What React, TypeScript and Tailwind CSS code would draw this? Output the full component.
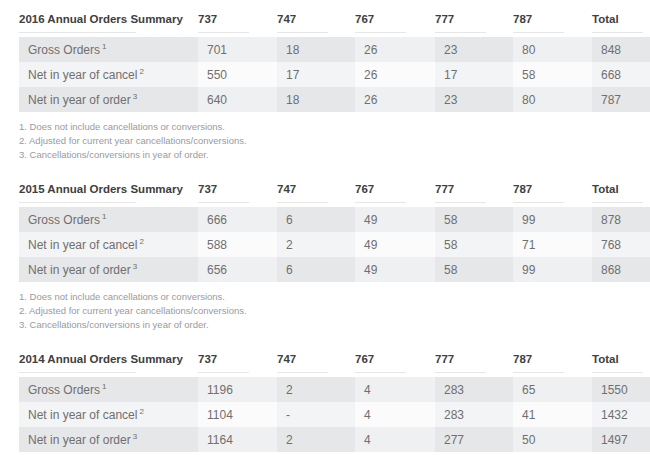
import React from "react";

type Section = {
  year: string;
  notes: boolean;
  rows: { label: string; sup: string; values: string[] }[];
};

const sections: Section[] = [
  {
    year: "2016",
    notes: true,
    rows: [
      { label: "Gross Orders", sup: "1", values: ["701", "18", "26", "23", "80", "848"] },
      { label: "Net in year of cancel", sup: "2", values: ["550", "17", "26", "17", "58", "668"] },
      { label: "Net in year of order", sup: "3", values: ["640", "18", "26", "23", "80", "787"] },
    ],
  },
  {
    year: "2015",
    notes: true,
    rows: [
      { label: "Gross Orders", sup: "1", values: ["666", "6", "49", "58", "99", "878"] },
      { label: "Net in year of cancel", sup: "2", values: ["588", "2", "49", "58", "71", "768"] },
      { label: "Net in year of order", sup: "3", values: ["656", "6", "49", "58", "99", "868"] },
    ],
  },
  {
    year: "2014",
    notes: false,
    rows: [
      { label: "Gross Orders", sup: "1", values: ["1196", "2", "4", "283", "65", "1550"] },
      { label: "Net in year of cancel", sup: "2", values: ["1104", "-", "4", "283", "41", "1432"] },
      { label: "Net in year of order", sup: "3", values: ["1164", "2", "4", "277", "50", "1497"] },
    ],
  },
];

const headers = ["737", "747", "767", "777", "787", "Total"];
const colWidths = ["w-[79px]", "w-[78px]", "w-[80px]", "w-[78px]", "w-[79px]", "w-[79px]"];

function cellBg(rowIdx: number, colIdx: number) {
  const odd = rowIdx % 2 === 0;
  const dark = colIdx % 2 === 0;
  if (odd) return dark ? "bg-[#e6e7e9]" : "bg-[#eff0f1]";
  return dark ? "bg-[#f3f4f5]" : "bg-[#fbfbfc]";
}

function SectionTable({ s }: { s: Section }) {
  return (
    <div className="pt-[12px] pb-[8px]">
      <div className="flex">
        <div className="w-[179px] shrink-0">
          <div className="w-[117px] border-b border-[#e6e6e6] pb-[6px] text-[11.5px] leading-[14px] font-bold text-[#404040] whitespace-nowrap">
            {s.year} Annual Orders Summary
          </div>
        </div>
        {headers.map((h, i) => (
          <div key={h} className={`${colWidths[i]} shrink-0`}>
            <div className="w-[51px] border-b border-[#e6e6e6] pb-[6px] text-[11.5px] leading-[14px] font-bold text-[#404040]">
              {h}
            </div>
          </div>
        ))}
      </div>
      <div className="mt-[4px] flex flex-col">
        {s.rows.map((r, ri) => (
          <div key={r.label} className="flex h-[25px]">
            <div className={`w-[179px] shrink-0 pl-[9px] flex items-center text-[12px] text-[#6f6f6f] ${cellBg(ri, 0)}`}>
              <span>
                {r.label}
                <sup className="text-[8px] ml-[2px] relative top-[-5px]">{r.sup}</sup>
              </span>
            </div>
            {r.values.map((v, ci) => (
              <div
                key={ci}
                className={`${colWidths[ci]} shrink-0 pl-[9px] flex items-center text-[12px] text-[#6f6f6f] ${cellBg(ri, ci + 1)}`}
              >
                {v}
              </div>
            ))}
          </div>
        ))}
      </div>
      {s.notes && (
        <div className="mt-[8px] text-[9.5px] leading-[14px] text-[#9a9a9a]">
          <div>1. Does not include cancellations or conversions.</div>
          <div>2. Adjusted for current year cancellations/conversions.</div>
          <div>3. Cancellations/conversions in year of order.</div>
        </div>
      )}
    </div>
  );
}

export default function App() {
  return (
    <div
      className="w-[650px] h-[455px] overflow-hidden bg-white pl-[19px]"
      style={{ fontFamily: '"Liberation Sans", Arial, sans-serif' }}
    >
      {sections.map((s) => (
        <SectionTable key={s.year} s={s} />
      ))}
    </div>
  );
}
